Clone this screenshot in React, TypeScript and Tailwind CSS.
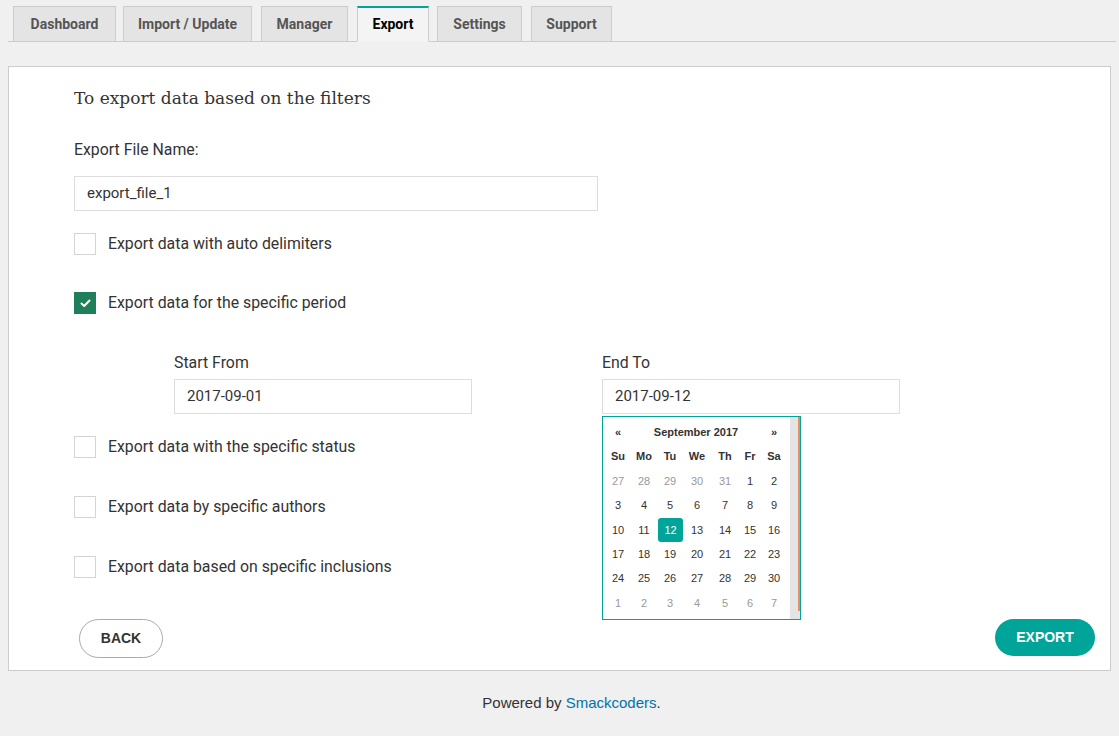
import React from "react";

const tabs = [
  { name: "Dashboard", w: "w-[103px]", ml: "ml-[5px]" },
  { name: "Import / Update", w: "w-[129px]", ml: "ml-[7px]" },
  { name: "Manager", w: "w-[87px]", ml: "ml-[9px]" },
  { name: "Export", w: "w-[72px]", ml: "ml-[9px]" },
  { name: "Settings", w: "w-[85px]", ml: "ml-[8px]" },
  { name: "Support", w: "w-[81px]", ml: "ml-[9px]" },
];

const colWidths = "grid-cols-[26px_26px_26px_28px_28px_22px_26px]";

const dayNames = ["Su", "Mo", "Tu", "We", "Th", "Fr", "Sa"];

// 6 weeks of September 2017, with the spill-over days muted
const weeks: { d: number; muted?: boolean }[][] = [
  [{ d: 27, muted: true }, { d: 28, muted: true }, { d: 29, muted: true }, { d: 30, muted: true }, { d: 31, muted: true }, { d: 1 }, { d: 2 }],
  [3, 4, 5, 6, 7, 8, 9].map((d) => ({ d })),
  [10, 11, 12, 13, 14, 15, 16].map((d) => ({ d })),
  [17, 18, 19, 20, 21, 22, 23].map((d) => ({ d })),
  [24, 25, 26, 27, 28, 29, 30].map((d) => ({ d })),
  [1, 2, 3, 4, 5, 6, 7].map((d) => ({ d, muted: true })),
];

const Checkbox = ({ checked, label }: { checked?: boolean; label: string }) => (
  <div className="flex items-center h-[24px]">
    {checked ? (
      <span className="w-[22px] h-[22px] bg-[#1f7f5b] flex items-center justify-center">
        <svg width="11" height="9" viewBox="0 0 11 9" fill="none">
          <path d="M1.5 4.5 L4.2 7 L9.5 1.5" stroke="#fff" strokeWidth="2" strokeLinecap="round" strokeLinejoin="round" />
        </svg>
      </span>
    ) : (
      <span className="w-[22px] h-[22px] border border-[#d4d4d4] bg-white" />
    )}
    <span className="ml-[12px] text-[15.85px] text-[#333] leading-[24px]">{label}</span>
  </div>
);

const Calendar = () => (
  <div className="absolute left-0 top-[41px] w-[199px] h-[204px] border border-[#00a499] bg-white flex font-['Liberation_Sans',Arial,sans-serif] text-[11px] text-[#333]">
    <div className="w-[187px] shrink-0 pt-[3px] pl-[2px]">
      <div className={`grid ${colWidths} h-[24.4px] items-center font-bold`}>
        <span className="text-center">«</span>
        <span className="col-span-5 text-center">September 2017</span>
        <span className="text-center">»</span>
      </div>
      <div className={`grid ${colWidths} h-[24.4px] items-center font-bold`}>
        {dayNames.map((n) => (
          <span key={n} className="text-center">{n}</span>
        ))}
      </div>
      {weeks.map((w, i) => (
        <div key={i} className={`grid ${colWidths} h-[24.4px] items-center`}>
          {w.map((c, j) =>
            c.d === 12 && !c.muted ? (
              <span key={j} className="h-[24px] ml-[1px] rounded-[3px] bg-[#00a499] text-white flex items-center justify-center">
                12
              </span>
            ) : (
              <span key={j} className={`text-center ${c.muted ? "text-[#999]" : ""}`}>{c.d}</span>
            )
          )}
        </div>
      ))}
    </div>
    <div className="w-[8px] shrink-0 bg-[#e4e4e4]" />
    <div className="w-[2px] shrink-0 bg-[#e4e4e4]">
      <div className="w-[2px] h-[194px] bg-[#e88d68]" />
    </div>
  </div>
);

export default function App() {
  return (
    <div className="min-h-[736px] bg-[#f0f0f0] font-['Roboto',sans-serif] pb-[20px]">
      <div className="ml-2 w-[1108px] border-b border-[#ccc] flex pt-[6px]">
        {tabs.map((t) =>
          t.name === "Export" ? (
            <div
              key={t.name}
              className={`${t.w} ${t.ml} h-[36px] -mb-px flex items-center justify-center bg-[#f4f4f4] border-x border-[#ccc] border-t-2 border-t-[#00a499] border-b border-b-[#f4f4f4] text-[14px] font-bold text-black`}
            >
              {t.name}
            </div>
          ) : (
            <div
              key={t.name}
              className={`${t.w} ${t.ml} h-[36px] -mb-px flex items-center justify-center bg-[#e4e4e4] border border-[#ccc] text-[14px] font-bold text-[#555] whitespace-nowrap`}
            >
              {t.name}
            </div>
          )
        )}
      </div>

      <div className="ml-2 mt-[24px] w-[1103px] h-[605px] bg-white border border-[#ccc]">
        <div className="pl-[65px]">
          <h2 className="pt-[19px] font-['DejaVu_Serif',serif] text-[17px] leading-[24px] text-[#333]">
            To export data based on the filters
          </h2>
          <div className="mt-[28px] text-[15.85px] leading-[24px] text-[#333]">Export File Name:</div>
          <div className="mt-[14px] w-[524px] h-[35px] border border-[#ddd] flex items-center pl-[12px] text-[15px] text-[#333]">
            export_file_1
          </div>
          <div className="mt-[21px]">
            <Checkbox label="Export data with auto delimiters" />
          </div>
          <div className="mt-[35px]">
            <Checkbox checked label="Export data for the specific period" />
          </div>
        </div>

        <div className="pl-[165px] mt-[36px] flex">
          <div className="w-[298px]">
            <div className="text-[15.85px] leading-[24px] text-[#333]">Start From</div>
            <div className="mt-[4px] h-[35px] border border-[#ddd] flex items-center pl-[12px] text-[15px] text-[#333]">
              2017-09-01
            </div>
          </div>
          <div className="ml-[130px] w-[298px] relative">
            <div className="text-[15.85px] leading-[24px] text-[#333]">End To</div>
            <div className="mt-[4px] h-[35px] border border-[#ddd] flex items-center pl-[12px] text-[15px] text-[#333]">
              2017-09-12
            </div>
            <div className="absolute left-0 top-[24px]">
              <Calendar />
            </div>
          </div>
        </div>

        <div className="pl-[65px]">
          <div className="mt-[21px]">
            <Checkbox label="Export data with the specific status" />
          </div>
          <div className="mt-[36px]">
            <Checkbox label="Export data by specific authors" />
          </div>
          <div className="mt-[36px]">
            <Checkbox label="Export data based on specific inclusions" />
          </div>
        </div>

        <div className="mt-[40px] pl-[70px] pr-[15px] flex justify-between items-start font-['Liberation_Sans',Arial,sans-serif]">
          <button className="w-[84px] h-[39px] rounded-full border border-[#aaa] bg-white text-[14px] font-bold text-[#333]">
            BACK
          </button>
          <button className="w-[100px] h-[37px] rounded-full bg-[#00a499] text-[14px] font-bold text-white">
            EXPORT
          </button>
        </div>
      </div>

      <div className="mt-[21px] pl-[24px] text-center font-['Liberation_Sans',Arial,sans-serif] text-[15px] text-[#333]">
        Powered by <span className="text-[#0073aa]">Smackcoders</span>.
      </div>
    </div>
  );
}
